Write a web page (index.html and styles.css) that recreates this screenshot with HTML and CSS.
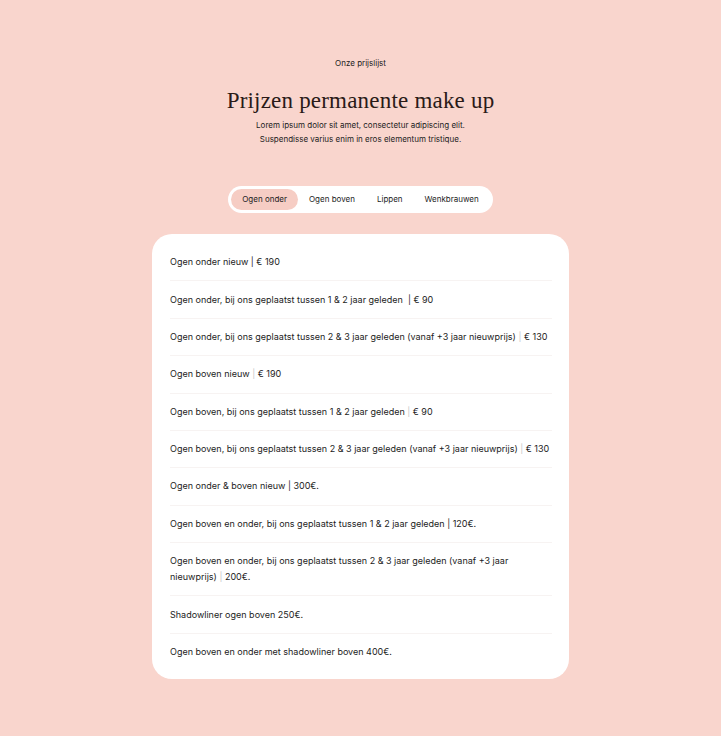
FILE: index.html
```html
<!DOCTYPE html>
<html lang="nl">
<head>
<meta charset="utf-8">
<title>Prijzen permanente make up</title>
<link rel="stylesheet" href="styles.css">
</head>
<body>
<main class="page">
  <header class="intro">
    <p class="eyebrow">Onze prijslijst</p>
    <h1 class="title">Prijzen permanente make up</h1>
    <p class="lead">Lorem ipsum dolor sit amet, consectetur adipiscing elit.<br>Suspendisse varius enim in eros elementum tristique.</p>
  </header>
  <nav class="tabs">
    <span class="tab active">Ogen onder</span>
    <span class="tab">Ogen boven</span>
    <span class="tab">Lippen</span>
    <span class="tab">Wenkbrauwen</span>
  </nav>
  <section class="card">
    <ul class="list">
      <li>Ogen onder nieuw | € 190</li>
      <li>Ogen onder, bij ons geplaatst tussen 1 &amp; 2 jaar geleden &nbsp;| € 90</li>
      <li>Ogen onder, bij ons geplaatst tussen 2 &amp; 3 jaar geleden (vanaf +3 jaar nieuwprijs) <span class="bar">|</span> € 130</li>
      <li>Ogen boven nieuw <span class="bar">|</span> € 190</li>
      <li>Ogen boven, bij ons geplaatst tussen 1 &amp; 2 jaar geleden <span class="bar">|</span> € 90</li>
      <li>Ogen boven, bij ons geplaatst tussen 2 &amp; 3 jaar geleden (vanaf +3 jaar nieuwprijs) <span class="bar">|</span> € 130</li>
      <li>Ogen onder &amp; boven nieuw | 300€.</li>
      <li>Ogen boven en onder, bij ons geplaatst tussen 1 &amp; 2 jaar geleden | 120€.</li>
      <li>Ogen boven en onder, bij ons geplaatst tussen 2 &amp; 3 jaar geleden (vanaf +3 jaar<br>nieuwprijs) <span class="bar">|</span> 200€.</li>
      <li>Shadowliner ogen boven 250€.</li>
      <li>Ogen boven en onder met shadowliner boven 400€.</li>
    </ul>
  </section>
</main>
</body>
</html>
```
FILE: styles.css
```css
* { box-sizing: border-box; }
html, body { margin: 0; padding: 0; }
body {
  background: #f9d5cd;
  font-family: Inter, "Noto Sans", sans-serif;
  color: #1c1c1c;
}
.page {
  display: flex;
  flex-direction: column;
  align-items: center;
  padding: 57px 0 56px;
}
.intro {
  display: flex;
  flex-direction: column;
  align-items: center;
  text-align: center;
}
.eyebrow {
  margin: 0;
  font-size: 8px;
  line-height: 12px;
}
.title {
  margin: 17px 0 0;
  font-family: "Liberation Serif", serif;
  font-weight: 400;
  font-size: 23px;
  line-height: 30px;
  color: #2a1a17;
  letter-spacing: 0.2px;
}
.lead {
  margin: 2px 0 0;
  font-size: 8px;
  line-height: 14px;
}
.tabs {
  margin-top: 40px;
  display: flex;
  align-items: center;
  background: #fff;
  border-radius: 14px;
  padding: 3px;
}
.tab {
  font-size: 8px;
  line-height: 21px;
  padding: 0 11px;
  border-radius: 11px;
}
.tab.active {
  background: #f6cdc4;
}
.card {
  margin-top: 21px;
  width: 417px;
  background: #fff;
  border-radius: 20px;
  padding: 10px 17px 9px 18px;
}
.list {
  list-style: none;
  margin: 0;
  padding: 0;
}
.list li {
  font-size: 9px;
  line-height: 16px;
  padding: 10.2px 0;
  border-bottom: 1px solid #f7f3f2;
}
.list li:last-child { border-bottom: none; }
.bar { color: #c8c8c8; }
```
